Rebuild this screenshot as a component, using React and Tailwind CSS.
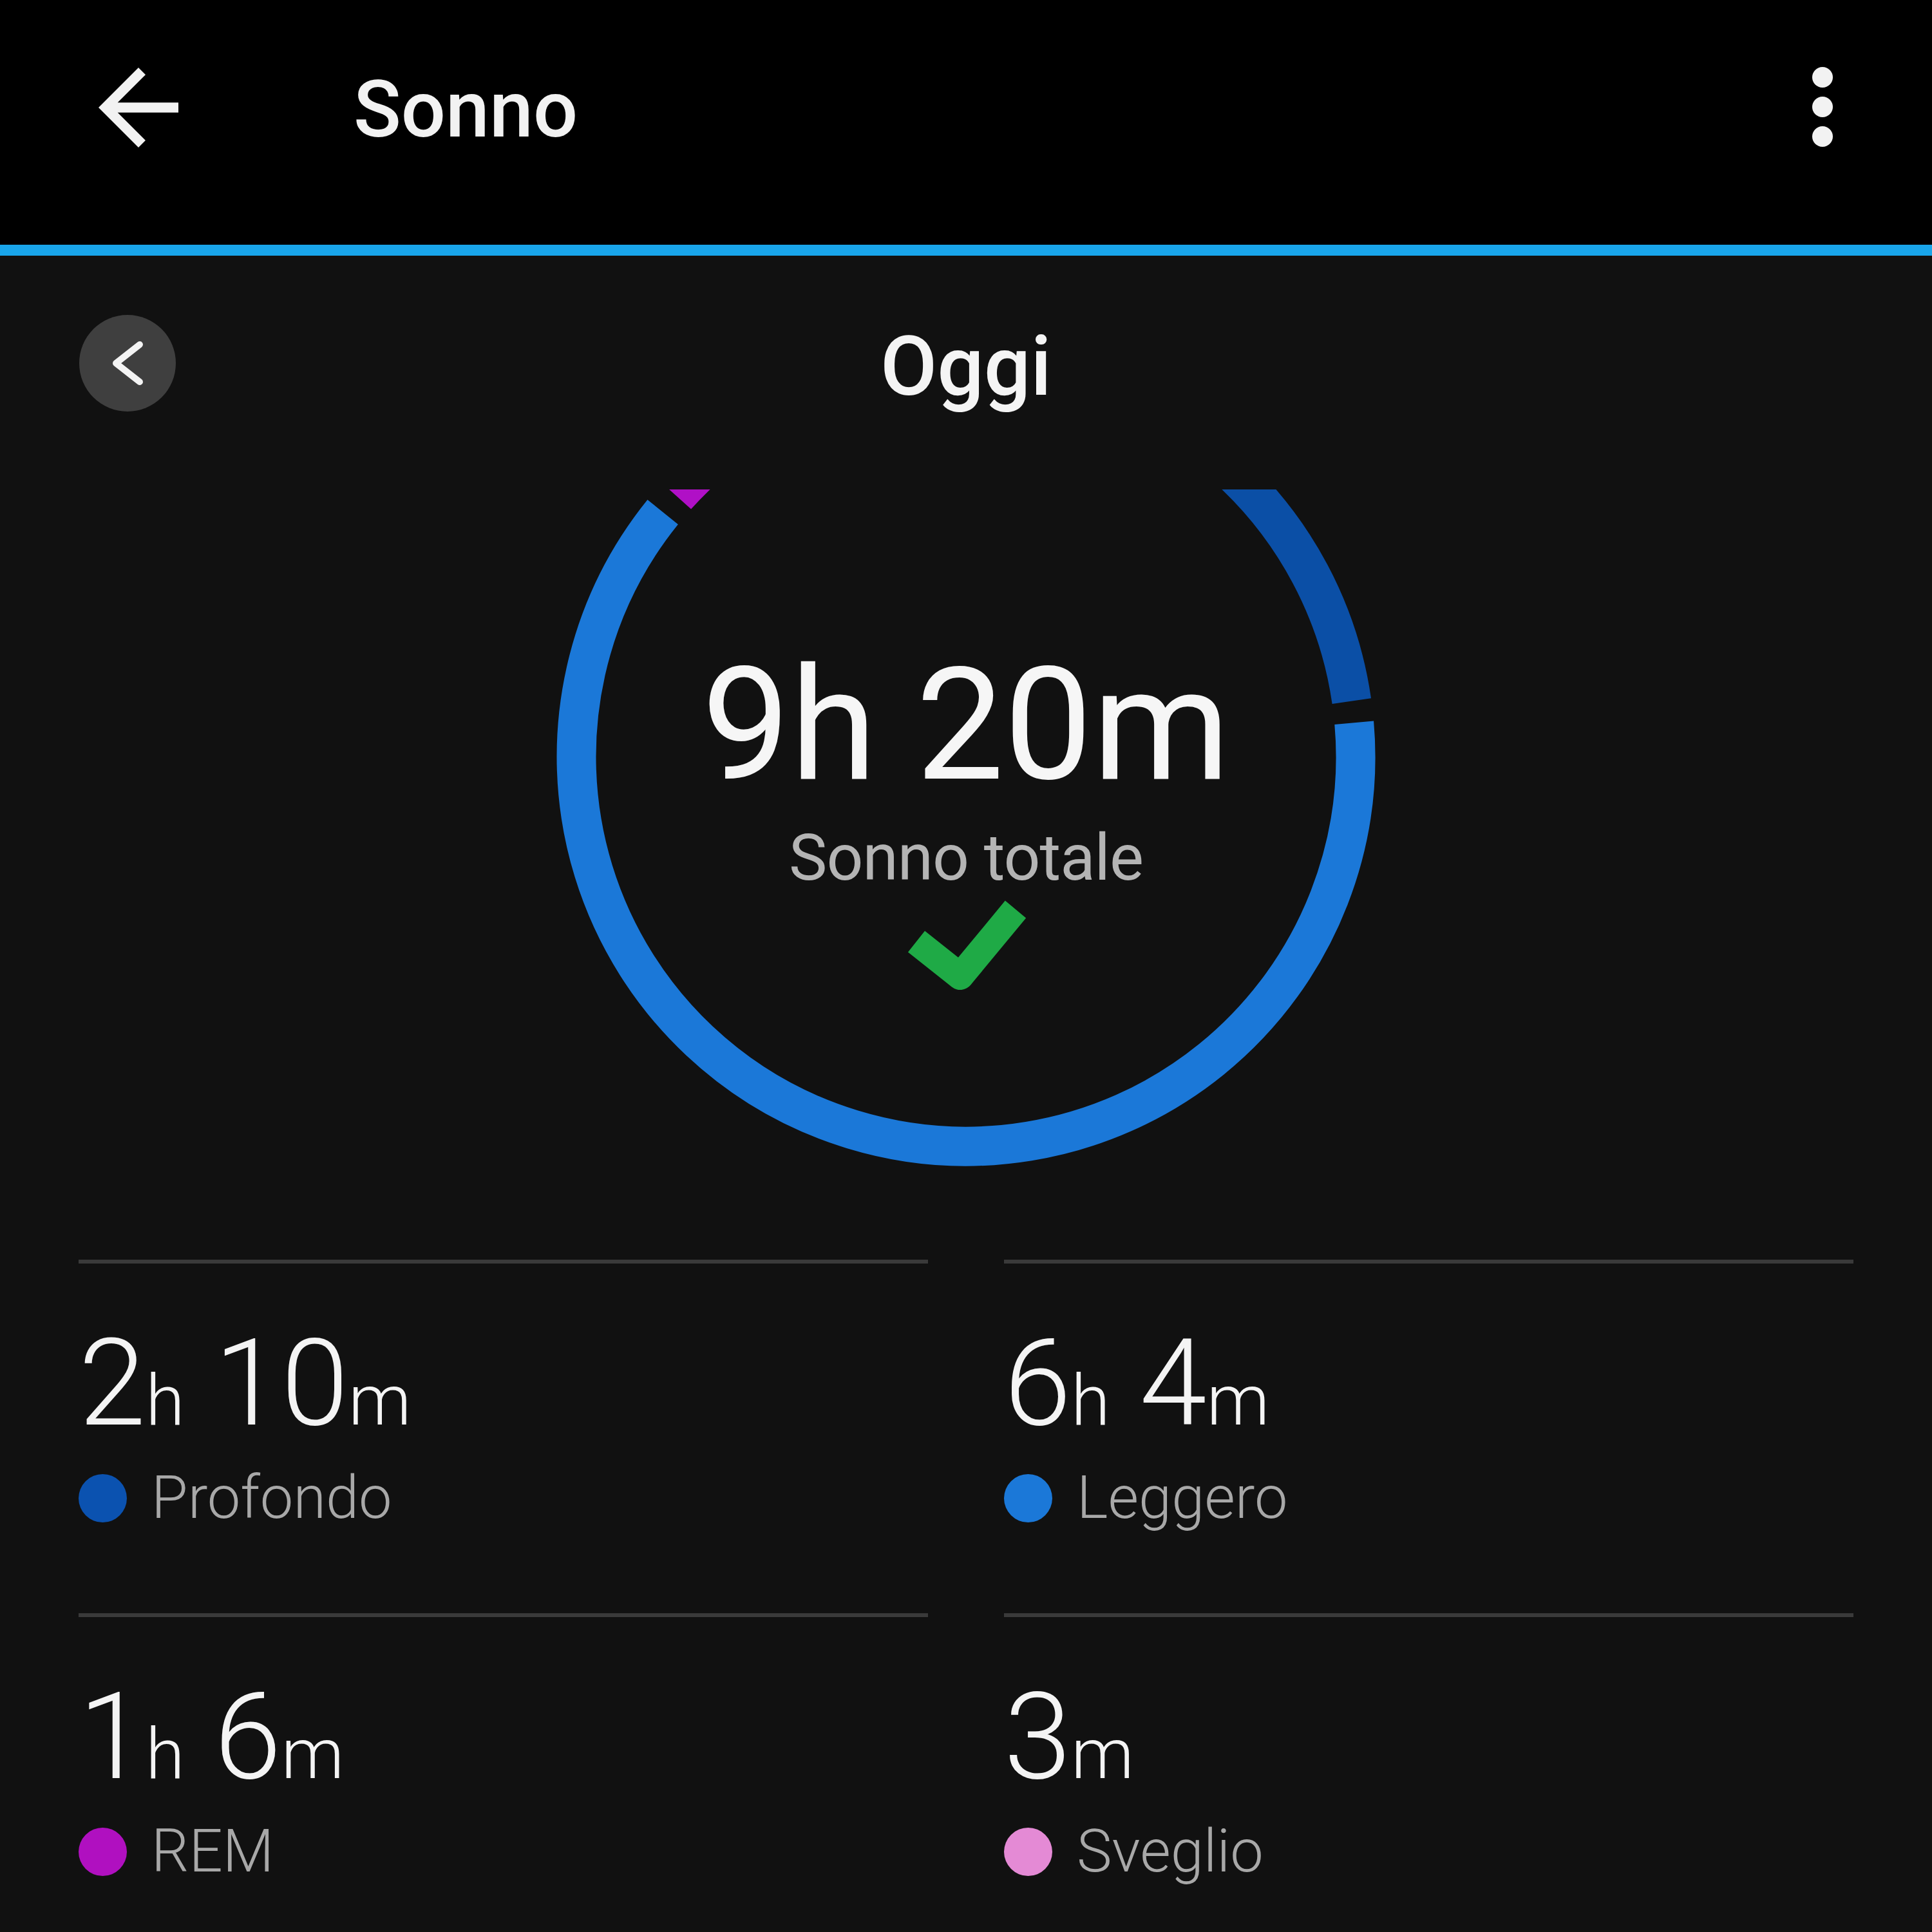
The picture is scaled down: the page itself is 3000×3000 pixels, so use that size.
import React from "react";

const CX = 1500;
const CY = 415;
const R = 605;

function point(deg) {
  const a = (deg * Math.PI) / 180;
  return [CX + R * Math.sin(a), CY - R * Math.cos(a)];
}

function arcPath(start, end) {
  const [x1, y1] = point(start);
  const [x2, y2] = point(end);
  const large = end - start > 180 ? 1 : 0;
  return `M ${x1} ${y1} A ${R} ${R} 0 ${large} 1 ${x2} ${y2}`;
}

const segments = [
  { start: 0, end: 81.8, color: "#0b4fa6" },
  { start: 85, end: 308.9, color: "#1b78d8" },
  { start: 312, end: 353, color: "#b010c6" },
  { start: 356, end: 358.5, color: "#e58bd6" },
];

const stats = [
  { parts: [["2", "h"], ["10", "m"]], label: "Profondo", dot: "bg-[#0b52b0]" },
  { parts: [["6", "h"], ["4", "m"]], label: "Leggero", dot: "bg-[#1b78d8]" },
  { parts: [["1", "h"], ["6", "m"]], label: "REM", dot: "bg-[#b010c0]" },
  { parts: [["3", "m"]], label: "Sveglio", dot: "bg-[#e48ad5]" },
];

function Stat({ parts, label, dot }) {
  return (
    <div className="pb-[133px]">
      <div className="h-[6px] bg-[#3a3a3a]" />
      <div className="mt-[92px] text-[188px] leading-none font-light text-[#f4f4f4] whitespace-pre">
        {parts.map(([num, unit], i) => (
          <span key={i}>
            {i > 0 ? " " : ""}
            {num}
            <span className="text-[110px]">{unit}</span>
          </span>
        ))}
      </div>
      <div className="mt-[38px] flex items-center gap-[38px]">
        <span className={`w-[75px] h-[75px] rounded-full ${dot}`} />
        <span className="text-[92px] leading-none font-light text-[#a8a8a8]">{label}</span>
      </div>
    </div>
  );
}

export default function App() {
  return (
    <div className="w-[3000px] h-[3000px] overflow-hidden bg-[#111111] font-['Roboto','Noto_Sans',sans-serif] text-white">
      {/* toolbar */}
      <header className="h-[380px] bg-black flex items-start">
        <svg className="ml-[122px] mt-[74px] w-[186px] h-[186px]" viewBox="0 0 24 24" fill="#f2f2f2">
          <path d="M20 11H7.83l5.59-5.59L12 4l-8 8 8 8 1.41-1.41L7.83 13H20v-2z" />
        </svg>
        <h1 className="ml-[241px] mt-[110px] text-[122px] leading-none font-medium text-[#f2f2f2]">Sonno</h1>
        <div className="ml-auto mr-[154px] mt-[104px] flex flex-col gap-[14px]">
          <span className="w-[32px] h-[32px] rounded-full bg-[#f2f2f2]" />
          <span className="w-[32px] h-[32px] rounded-full bg-[#f2f2f2]" />
          <span className="w-[32px] h-[32px] rounded-full bg-[#f2f2f2]" />
        </div>
      </header>
      <div className="h-[17px] bg-[#19a5ea]" />

      {/* day selector */}
      <div className="h-[363px] pt-[92px]">
        <div className="grid grid-cols-[1fr_auto_1fr] items-center h-[150px]">
          <div className="pl-[123px]">
            <div className="w-[150px] h-[150px] rounded-full bg-[#3f3f3f]">
              <svg width="150" height="150" viewBox="0 0 150 150">
                <polyline points="94,46 57,75 94,104" fill="none" stroke="#f4f4f4" strokeWidth="10" strokeLinecap="round" strokeLinejoin="round" />
              </svg>
            </div>
          </div>
          <div className="text-[128px] leading-none font-medium text-[#f4f4f4] mt-[10px]">Oggi</div>
          <div />
        </div>
      </div>

      {/* ring */}
      <div className="relative h-[1060px]">
        <svg className="absolute inset-0" width="3000" height="1060" viewBox="0 0 3000 1060">
          {segments.map((s, i) => (
            <path key={i} d={arcPath(s.start, s.end)} fill="none" stroke={s.color} strokeWidth="61" />
          ))}
        </svg>
        <div className="relative flex flex-col items-center pt-[244px]">
          <div className="text-[244px] leading-none text-[#f6f6f6]">9h 20m</div>
          <div className="mt-[34px] text-[100px] leading-none text-[#b4b4b4] tracking-[-1px]">Sonno totale</div>
          <svg className="mt-[14px]" width="190" height="144" viewBox="0 0 190 144">
            <polyline points="18,66 86,120 172,16" fill="none" stroke="#1faa46" strokeWidth="42" strokeLinejoin="round" />
          </svg>
        </div>
      </div>

      {/* stats */}
      <div className="mt-[136px] px-[122px] grid grid-cols-2 gap-x-[118px]">
        {stats.map((s) => (
          <Stat key={s.label} {...s} />
        ))}
      </div>
    </div>
  );
}
